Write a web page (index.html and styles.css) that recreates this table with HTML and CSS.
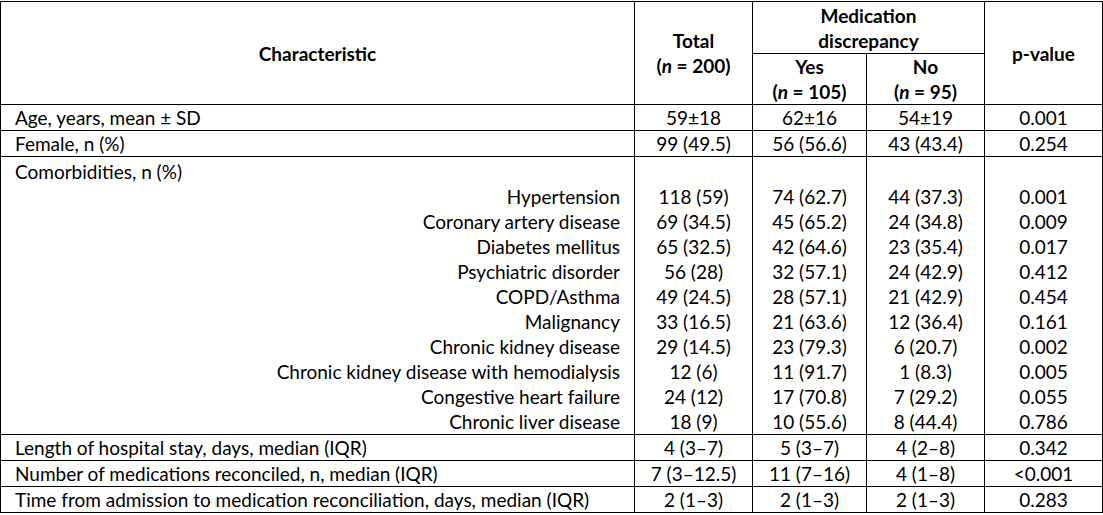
FILE: index.html
```html
<!DOCTYPE html>
<html>
<head>
<meta charset="utf-8">
<link rel="stylesheet" href="styles.css">
</head>
<body>
<table class="tbl">
  <colgroup>
    <col class="c-char">
    <col class="c-total">
    <col class="c-yes">
    <col class="c-no">
    <col class="c-p">
  </colgroup>
  <thead>
    <tr class="h1">
      <th rowspan="2">Characteristic</th>
      <th rowspan="2">Total<br>(<i>n</i> = 200)</th>
      <th colspan="2">Medication<br>discrepancy</th>
      <th rowspan="2">p-value</th>
    </tr>
    <tr class="h2">
      <th>Yes<br>(<i>n</i> = 105)</th>
      <th>No<br>(<i>n</i> = 95)</th>
    </tr>
  </thead>
  <tbody>
    <tr class="row"><td class="lbl">Age, years, mean ± SD</td><td>59±18</td><td>62±16</td><td>54±19</td><td>0.001</td></tr>
    <tr class="row"><td class="lbl">Female, n (%)</td><td>99 (49.5)</td><td>56 (56.6)</td><td>43 (43.4)</td><td>0.254</td></tr>
    <tr class="grp-top"><td class="lbl">Comorbidities, n (%)</td><td></td><td></td><td></td><td></td></tr>
    <tr class="sub"><td class="sublbl">Hypertension</td><td>118 (59)</td><td>74 (62.7)</td><td>44 (37.3)</td><td>0.001</td></tr>
    <tr class="sub"><td class="sublbl">Coronary artery disease</td><td>69 (34.5)</td><td>45 (65.2)</td><td>24 (34.8)</td><td>0.009</td></tr>
    <tr class="sub"><td class="sublbl">Diabetes mellitus</td><td>65 (32.5)</td><td>42 (64.6)</td><td>23 (35.4)</td><td>0.017</td></tr>
    <tr class="sub"><td class="sublbl">Psychiatric disorder</td><td>56 (28)</td><td>32 (57.1)</td><td>24 (42.9)</td><td>0.412</td></tr>
    <tr class="sub"><td class="sublbl">COPD/Asthma</td><td>49 (24.5)</td><td>28 (57.1)</td><td>21 (42.9)</td><td>0.454</td></tr>
    <tr class="sub"><td class="sublbl">Malignancy</td><td>33 (16.5)</td><td>21 (63.6)</td><td>12 (36.4)</td><td>0.161</td></tr>
    <tr class="sub"><td class="sublbl">Chronic kidney disease</td><td>29 (14.5)</td><td>23 (79.3)</td><td>6 (20.7)</td><td>0.002</td></tr>
    <tr class="sub"><td class="sublbl">Chronic kidney disease with hemodialysis</td><td>12 (6)</td><td>11 (91.7)</td><td>1 (8.3)</td><td>0.005</td></tr>
    <tr class="sub"><td class="sublbl">Congestive heart failure</td><td>24 (12)</td><td>17 (70.8)</td><td>7 (29.2)</td><td>0.055</td></tr>
    <tr class="sub grp-end"><td class="sublbl">Chronic liver disease</td><td>18 (9)</td><td>10 (55.6)</td><td>8 (44.4)</td><td>0.786</td></tr>
    <tr class="row"><td class="lbl">Length of hospital stay, days, median (IQR)</td><td>4 (3–7)</td><td>5 (3–7)</td><td>4 (2–8)</td><td>0.342</td></tr>
    <tr class="row"><td class="lbl">Number of medications reconciled, n, median (IQR)</td><td>7 (3–12.5)</td><td>11 (7–16)</td><td>4 (1–8)</td><td>&lt;0.001</td></tr>
    <tr class="row"><td class="lbl">Time from admission to medication reconciliation, days, median (IQR)</td><td>2 (1–3)</td><td>2 (1–3)</td><td>2 (1–3)</td><td>0.283</td></tr>
  </tbody>
</table>
</body>
</html>
```

FILE: styles.css
```css
html, body {
  margin: 0;
  padding: 0;
  background: #ffffff;
}
body {
  padding-top: 1px;
}
.tbl {
  border-collapse: collapse;
  table-layout: fixed;
  width: 1102px;
  font-family: Lato, "Open Sans", sans-serif;
  font-size: 19px;
  color: #000;
  line-height: 25px;
}
.c-char { width: 634px; }
.c-total { width: 118px; }
.c-yes { width: 114px; }
.c-no { width: 118px; }
.c-p { width: 118px; }
.tbl th, .tbl td {
  border: 1px solid #000;
  padding: 0;
  text-align: center;
  vertical-align: middle;
}
.tbl th {
  font-weight: bold;
}
.tbl th i {
  font-style: italic;
}
.h1 th { height: 51px; }
.h2 th { height: 50px; }
.row td { height: 25px; }
.tbl td.lbl {
  text-align: left;
  padding-left: 14px;
}
.tbl td.sublbl {
  text-align: right;
  padding-right: 14px;
}
.grp-top td {
  border-bottom: none;
  height: 25px;
  padding-top: 2px;
}
.sub td {
  border-top: none;
  border-bottom: none;
  height: 25px;
}
.sub.grp-end td {
  border-bottom: 1px solid #000;
}
```
